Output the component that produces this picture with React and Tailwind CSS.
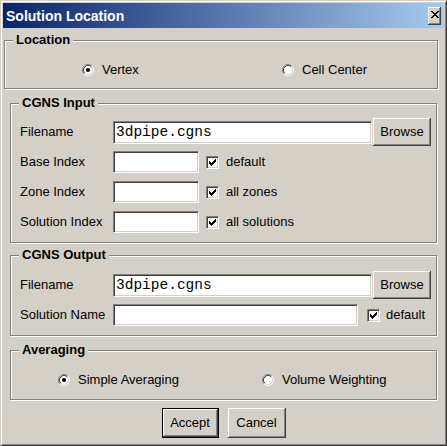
import React from 'react';

const sunken =
  'bg-white border border-t-[#808080] border-l-[#808080] border-r-white border-b-white shadow-[inset_1px_1px_0_#404040,inset_-1px_-1px_0_#d4d0c8]';
const raised =
  'bg-[#d4d0c8] shadow-[inset_-1px_-1px_0_#404040,inset_1px_1px_0_#fff,inset_-2px_-2px_0_#808080,inset_2px_2px_0_#d4d0c8]';

// pixel patterns for the little glyphs
const CHECK = [[6], [5, 6], [0, 4, 5, 6], [0, 1, 3, 4, 5], [0, 1, 2, 3, 4], [1, 2, 3], [2]];
const CLOSE = [[0, 1, 6, 7], [1, 2, 5, 6], [2, 3, 4, 5], [3, 4], [2, 3, 4, 5], [1, 2, 5, 6], [0, 1, 6, 7]];

const Pixels = ({ rows, w, h }) => (
  <svg width={w} height={h} viewBox={`0 0 ${w} ${h}`} shapeRendering="crispEdges">
    {rows.map((cols, y) => cols.map((x) => <rect key={`${x}-${y}`} x={x} y={y} width="1" height="1" fill="#000" />))}
  </svg>
);

const Radio = ({ checked }) => (
  <svg width="12" height="12" viewBox="0 0 12 12" className="shrink-0">
    <circle cx="6" cy="6" r="5" fill="#fff" />
    <path d="M2.11 9.89 A5.5 5.5 0 0 1 9.89 2.11" fill="none" stroke="#808080" />
    <path d="M9.89 2.11 A5.5 5.5 0 0 1 2.11 9.89" fill="none" stroke="#fff" />
    <path d="M2.82 9.18 A4.5 4.5 0 0 1 9.18 2.82" fill="none" stroke="#404040" />
    <path d="M9.18 2.82 A4.5 4.5 0 0 1 2.82 9.18" fill="none" stroke="#d4d0c8" />
    {checked && <circle cx="6" cy="6" r="2" fill="#000" />}
  </svg>
);

const Checkbox = () => (
  <span className={`w-[13px] h-[13px] shrink-0 flex items-center justify-center ${sunken}`}>
    <Pixels rows={CHECK} w={7} h={7} />
  </span>
);

const Group = ({ title, className, children }) => (
  <div className={`relative border border-[#808080] shadow-[1px_1px_0_#fff,inset_1px_1px_0_#fff] ${className}`}>
    <span className="absolute left-[8px] -top-[9px] bg-[#d4d0c8] px-[3px] font-bold text-[13px] leading-[16px]">
      {title}
    </span>
    {children}
  </div>
);

const Entry = ({ className, value }) => (
  <div className={`flex items-center pl-[2px] font-['Liberation_Mono',monospace] text-[14.5px] ${sunken} ${className}`}>
    {value}
  </div>
);

const Button = ({ children, className, isDefault }) =>
  isDefault ? (
    <div className={`border border-black ${className}`}>
      <div className={`w-full h-full flex items-center justify-center ${raised}`}>{children}</div>
    </div>
  ) : (
    <div className={`flex items-center justify-center ${raised} ${className}`}>{children}</div>
  );

const Label = ({ children }) => <span className="w-[93px] shrink-0">{children}</span>;

const IndexRow = ({ label, check }) => (
  <div className="h-[30px] flex items-center">
    <Label>{label}</Label>
    <Entry className="w-[86px] h-[22px]" />
    <span className="ml-[7px]">
      <Checkbox />
    </span>
    <span className="ml-[7px]">{check}</span>
  </div>
);

const FileRow = () => (
  <div className="h-[30px] flex items-center">
    <Label>Filename</Label>
    <Entry className="w-[259px] h-[23px]" value="3dpipe.cgns" />
    <Button className="ml-[1px] w-[58px] h-[28px]">Browse</Button>
  </div>
);

export default function App() {
  return (
    <div className="w-[447px] h-[446px] bg-[#d4d0c8] border border-t-[#d4d0c8] border-l-[#d4d0c8] border-r-[#404040] border-b-[#404040] shadow-[inset_1px_1px_0_#fff,inset_-1px_-1px_0_#808080] p-[2px] font-['Liberation_Sans',Arial,sans-serif] text-[13px] leading-[16px] text-black flex flex-col">
      {/* title bar */}
      <div className="h-[25px] shrink-0 flex items-center justify-between pl-[3px] pr-[3px] bg-[linear-gradient(to_right,#0a246a,#a6caf0)]">
        <span className="text-white font-bold text-[14px]">Solution Location</span>
        <div className={`w-[13px] h-[18px] flex justify-center pt-[4px] ${raised}`}>
          <Pixels rows={CLOSE} w={8} h={7} />
        </div>
      </div>

      <Group title="Location" className="mt-[12px] ml-[1px] w-[434px] h-[49px] shrink-0">
        <div className="pt-[21px] pl-[77px] flex">
          <div className="w-[200px] h-[15px] flex items-center gap-[8px]">
            <Radio checked />
            <span>Vertex</span>
          </div>
          <div className="h-[15px] flex items-center gap-[8px]">
            <Radio />
            <span>Cell Center</span>
          </div>
        </div>
      </Group>

      <Group title="CGNS Input" className="mt-[14px] ml-[7px] w-[427px] h-[140px] shrink-0">
        <div className="pt-[13px] pl-[9px] flex flex-col">
          <FileRow />
          <IndexRow label="Base Index" check="default" />
          <IndexRow label="Zone Index" check="all zones" />
          <IndexRow label="Solution Index" check="all solutions" />
        </div>
      </Group>

      <Group title="CGNS Output" className="mt-[12px] ml-[7px] w-[427px] h-[81px] shrink-0">
        <div className="pt-[14px] pl-[9px] flex flex-col">
          <FileRow />
          <div className="h-[30px] flex items-center">
            <Label>Solution Name</Label>
            <Entry className="w-[245px] h-[22px]" />
            <span className="ml-[9px]">
              <Checkbox />
            </span>
            <span className="ml-[6px]">default</span>
          </div>
        </div>
      </Group>

      <Group title="Averaging" className="mt-[14px] ml-[7px] w-[427px] h-[50px] shrink-0">
        <div className="pt-[21px] pl-[47px] flex">
          <div className="w-[204px] h-[15px] flex items-center gap-[8px]">
            <Radio checked />
            <span>Simple Averaging</span>
          </div>
          <div className="h-[15px] flex items-center gap-[8px]">
            <Radio />
            <span>Volume Weighting</span>
          </div>
        </div>
      </Group>

      <div className="mt-[8px] flex justify-center gap-[9px]">
        <Button isDefault className="w-[57px] h-[30px]">
          Accept
        </Button>
        <Button className="w-[58px] h-[30px]">Cancel</Button>
      </div>
    </div>
  );
}
